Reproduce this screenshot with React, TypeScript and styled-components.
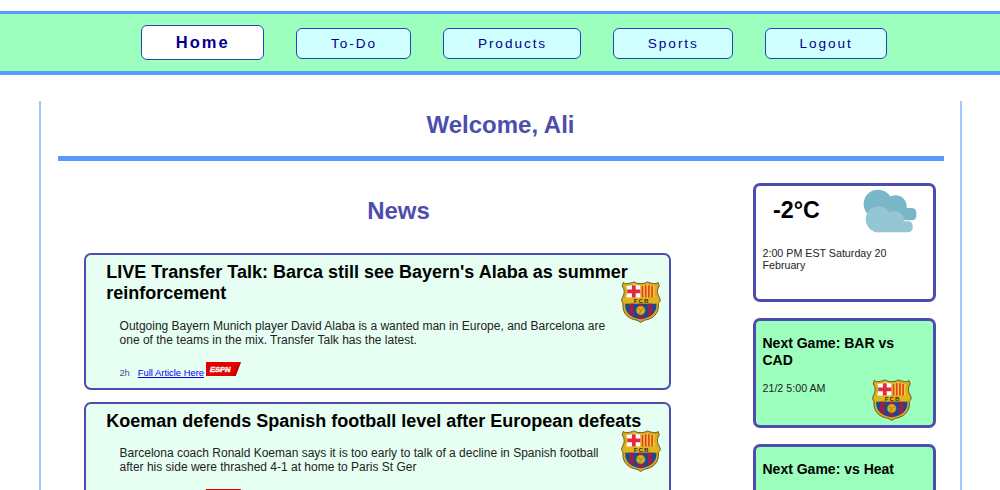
import React from "react";
import styled, { createGlobalStyle } from "styled-components";

const GlobalStyle = createGlobalStyle`
  * { box-sizing: border-box; }
  html, body { margin: 0; height: 490px; overflow: hidden; background: #fff; }
  body { font-family: "Liberation Sans", Arial, sans-serif; color: #000; }
  h1, h2, h3, p { margin: 0; }
`;

const Page = styled.div`
  height: 490px;
  padding-top: 11px;
  overflow: hidden;
`;

const NavBar = styled.nav`
  display: flex;
  align-items: flex-start;
  gap: 32px;
  height: 64px;
  padding: 11px 0 0 140.5px;
  background: #9dffbd;
  border-top: 3px solid #589bff;
  border-bottom: 4px solid #589bff;
`;

const NavButton = styled.a<{ $width: number; $active?: boolean }>`
  display: flex;
  justify-content: center;
  align-items: center;
  width: ${(p) => p.$width}px;
  height: ${(p) => (p.$active ? 35 : 31.5)}px;
  margin-top: ${(p) => (p.$active ? 0 : 2.6)}px;
  padding: ${(p) => (p.$active ? "0 0 1px 1px" : "1px 0 0 1px")};
  border: 1px solid #2342bd;
  border-radius: 6px;
  background: ${(p) => (p.$active ? "#fff" : "#d0ffff")};
  color: #00008b;
  font-size: ${(p) => (p.$active ? 16.5 : 13.6)}px;
  font-weight: ${(p) => (p.$active ? 700 : 400)};
  letter-spacing: ${(p) => (p.$active ? 2.1 : 1.95)}px;
`;

const Main = styled.main`
  width: 923px;
  height: 420px;
  margin: 26px 0 0 39px;
  padding: 10px 16.5px 0 16.5px;
  border-left: 2px solid #a1c7ff;
  border-right: 2px solid #a1c7ff;
`;

const Title = styled.h1`
  color: #4d4dad;
  font-size: 24px;
  line-height: 28px;
  text-align: center;
`;

const Rule = styled.div`
  height: 5px;
  margin-top: 17px;
  background: #589bff;
`;

const Columns = styled.div`
  display: flex;
  align-items: flex-start;
  justify-content: space-between;
  padding: 22px 8px 0 26.5px;
`;

const News = styled.section`
  display: flex;
  flex-direction: column;
  width: 587px;
  padding-top: 14px;
`;

const NewsTitle = styled(Title)`
  padding-left: 42px;
  margin-bottom: 28px;
`;

const Article = styled.article`
  position: relative;
  height: 137px;
  margin-bottom: 12px;
  padding: 7px 20px 0 20.2px;
  background: #e6fff2;
  border: 2px solid #4d4dad;
  border-radius: 7px;
`;

const Headline = styled.h2`
  font-size: 18px;
  line-height: 21px;
  white-space: nowrap;
`;

const Summary = styled.p<{ $gap: number }>`
  margin: ${(p) => p.$gap}px 0 0 13.4px;
  color: #222;
  font-size: 12px;
  line-height: 14px;
  white-space: nowrap;
`;

const Meta = styled.div`
  display: flex;
  align-items: flex-end;
  margin: 15px 0 0 13.2px;
  height: 17px;
  color: #4d4d99;
  font-size: 9.4px;
  line-height: 12px;
`;

const ArticleLink = styled.a`
  margin: 0 2.5px 0 8px;
  color: #0000ee;
  text-decoration: underline;
`;

const EspnMark = styled.svg`
  width: 35px;
  height: 14px;
  margin-bottom: 3.5px;
`;

const CrestSpot = styled.div<{ $right: number; $top: number }>`
  position: absolute;
  right: ${(p) => p.$right}px;
  top: ${(p) => p.$top}px;
  width: 40px;
  height: 42px;
`;

const Sidebar = styled.aside`
  display: flex;
  flex-direction: column;
  gap: 16px;
  width: 183px;
`;

const SideCard = styled.section<{ $height: number; $tint?: boolean }>`
  position: relative;
  height: ${(p) => p.$height}px;
  padding-left: 7px;
  background: ${(p) => (p.$tint ? "#9dffbd" : "#fff")};
  border: 3px solid #4d4dad;
  border-radius: 7px;
`;

const WeatherTop = styled.div`
  display: flex;
  justify-content: space-between;
  padding: 3px 14.5px 0 10.5px;
  height: 61px;
`;

const Temperature = styled.h2`
  padding-top: 6.5px;
  font-size: 23.3px;
  line-height: 28px;
`;

const CloudArt = styled.svg`
  width: 55px;
  height: 45px;
`;

const SideText = styled.p`
  color: #222;
  font-size: 10.7px;
  line-height: 12.4px;
  white-space: nowrap;
`;

const GameTitle = styled.h3`
  padding-top: 14px;
  margin-bottom: 14px;
  font-size: 14px;
  line-height: 16.5px;
  white-space: nowrap;
`;

const Cloud = () => (
  <CloudArt viewBox="368 40 165 135">
    <g fill="#78b6c8">
      <circle cx="413" cy="85" r="43" />
      <circle cx="466" cy="92" r="33" />
      <rect x="440" y="97" width="88" height="37" rx="13" />
    </g>
    <g fill="#94c7d3">
      <circle cx="415" cy="131" r="39" />
      <circle cx="463" cy="134" r="28" />
      <rect x="395" y="137" width="122" height="33" rx="13" />
    </g>
  </CloudArt>
);

const Espn = () => (
  <EspnMark viewBox="0 0 35 14">
    <path d="M0 0H35L29.5 14H0Z" fill="#e00000" />
    <path d="M35 0L29.5 14H26.5Z" fill="#b80000" />
    <text x="4" y="9.8" textLength="20.5" lengthAdjust="spacingAndGlyphs" fontSize="7.4" fontWeight="700" fontStyle="italic" fill="#fff" stroke="#fff" strokeWidth=".5">
      ESPN
    </text>
    <path d="M4 6.2H26" stroke="#e00000" strokeWidth=".35" />
  </EspnMark>
);

const shield =
  "M2.2 1.5C5 3.6 8.5 2.4 13.2 .9C15.4 2.3 17.5 2.7 19.7 2.5C22 2.7 24 2.3 26.2 .9C31 2.4 34.5 3.6 37.2 1.5L38.3 5C36.2 8 35.6 12 38 15.5L39.4 19.5L37.4 22.5C38.6 34 30 38.5 23.5 39.2L19.7 41.4L16 39.2C9.5 38.5 .8 34 2 22.5L.4 19.5L1.8 15.5C4 12 3.3 8 1.2 5Z";

const Crest = () => (
  <svg width="40" height="42" viewBox="0 0 40 42">
    <path d={shield} fill="#d9ad16" stroke="#5a5030" strokeWidth=".9" />
    <path d="M5.3 4.8Q12 4.5 13.5 3.2Q16 4.6 19.3 4.6V16.5H5.2Q7 10 5.3 4.8Z" fill="#fff" />
    <path d="M10.9 4.2H14.7V16.5H10.9ZM6.2 8.6H19.3V12.2H6.2Z" fill="#e02b3c" />
    <path d="M20.2 4.6Q24 4.6 26 3.2Q28 4.5 34.2 4.8Q32.6 10 34.4 16.5H20.2Z" fill="#f5c52e" />
    <path d="M21.5 5V16.5M24.7 4.2V16.5M27.9 4.3V16.5M31.1 5V16.5" stroke="#de3c32" strokeWidth="1.6" />
    <path d="M2 17.1H37.8V22H2Z" fill="#e0b51c" />
    <text x="20.5" y="21.9" textAnchor="middle" fontSize="6.2" fontWeight="700" letterSpacing="1" fill="#302c18">
      FCB
    </text>
    <path d="M4.2 22.7H35.4C36 31 31 36.5 19.7 38.3C8.5 36.5 3.7 31 4.2 22.7Z" fill="#164a92" />
    <path d="M8.2 22.7H12.7V36.5L8.2 33.3ZM17.3 22.7H22.1V37.8L19.7 38.3L17.3 37.8ZM26.8 22.7H31.3V33.3L26.8 36.5Z" fill="#9c1f4b" />
    <circle cx="19.7" cy="29.4" r="4.4" fill="#d9ad20" stroke="#a08020" strokeWidth=".5" />
    <path d="M17 27.7L19.7 29.4L22.5 27.6M19.7 29.4L18.6 33" stroke="#8a6c20" strokeWidth=".6" fill="none" />
  </svg>
);

const navItems = [
  { label: "Home", width: 123.5, active: true },
  { label: "To-Do", width: 115 },
  { label: "Products", width: 138 },
  { label: "Sports", width: 119.7 },
  { label: "Logout", width: 122 },
];

const articles = [
  {
    title: ["LIVE Transfer Talk: Barca still see Bayern's Alaba as summer", "reinforcement"],
    gap: 15,
    body: [
      "Outgoing Bayern Munich player David Alaba is a wanted man in Europe, and Barcelona are",
      "one of the teams in the mix. Transfer Talk has the latest.",
    ],
  },
  {
    title: ["Koeman defends Spanish football level after European defeats"],
    gap: 14,
    body: [
      "Barcelona coach Ronald Koeman says it is too early to talk of a decline in Spanish football",
      "after his side were thrashed 4-1 at home to Paris St Ger",
    ],
  },
];

const Lines = ({ items }: { items: string[] }) => (
  <>
    {items.map((line, i) => (
      <React.Fragment key={line}>
        {i > 0 && <br />}
        {line}
      </React.Fragment>
    ))}
  </>
);

export default function App() {
  return (
    <Page>
      <GlobalStyle />
      <NavBar>
        {navItems.map((item) => (
          <NavButton key={item.label} $width={item.width} $active={item.active}>
            {item.label}
          </NavButton>
        ))}
      </NavBar>
      <Main>
        <Title>Welcome, Ali</Title>
        <Rule />
        <Columns>
          <News>
            <NewsTitle as="h2">News</NewsTitle>
            {articles.map((a) => (
              <Article key={a.title[0]}>
                <Headline>
                  <Lines items={a.title} />
                </Headline>
                <Summary $gap={a.gap}>
                  <Lines items={a.body} />
                </Summary>
                <Meta>
                  <span>2h</span>
                  <ArticleLink>Full Article Here</ArticleLink>
                  <Espn />
                </Meta>
                <CrestSpot $right={7.6} $top={26}>
                  <Crest />
                </CrestSpot>
              </Article>
            ))}
          </News>
          <Sidebar>
            <SideCard $height={119}>
              <WeatherTop>
                <Temperature>-2°C</Temperature>
                <Cloud />
              </WeatherTop>
              <SideText>
                <Lines items={["2:00 PM EST Saturday 20", "February"]} />
              </SideText>
            </SideCard>
            <SideCard $height={109.5} $tint>
              <GameTitle>
                <Lines items={["Next Game: BAR vs", "CAD"]} />
              </GameTitle>
              <SideText>21/2 5:00 AM</SideText>
              <CrestSpot $right={20.8} $top={58}>
                <Crest />
              </CrestSpot>
            </SideCard>
            <SideCard $height={109.5} $tint>
              <GameTitle>Next Game: vs Heat</GameTitle>
            </SideCard>
          </Sidebar>
        </Columns>
      </Main>
    </Page>
  );
}
